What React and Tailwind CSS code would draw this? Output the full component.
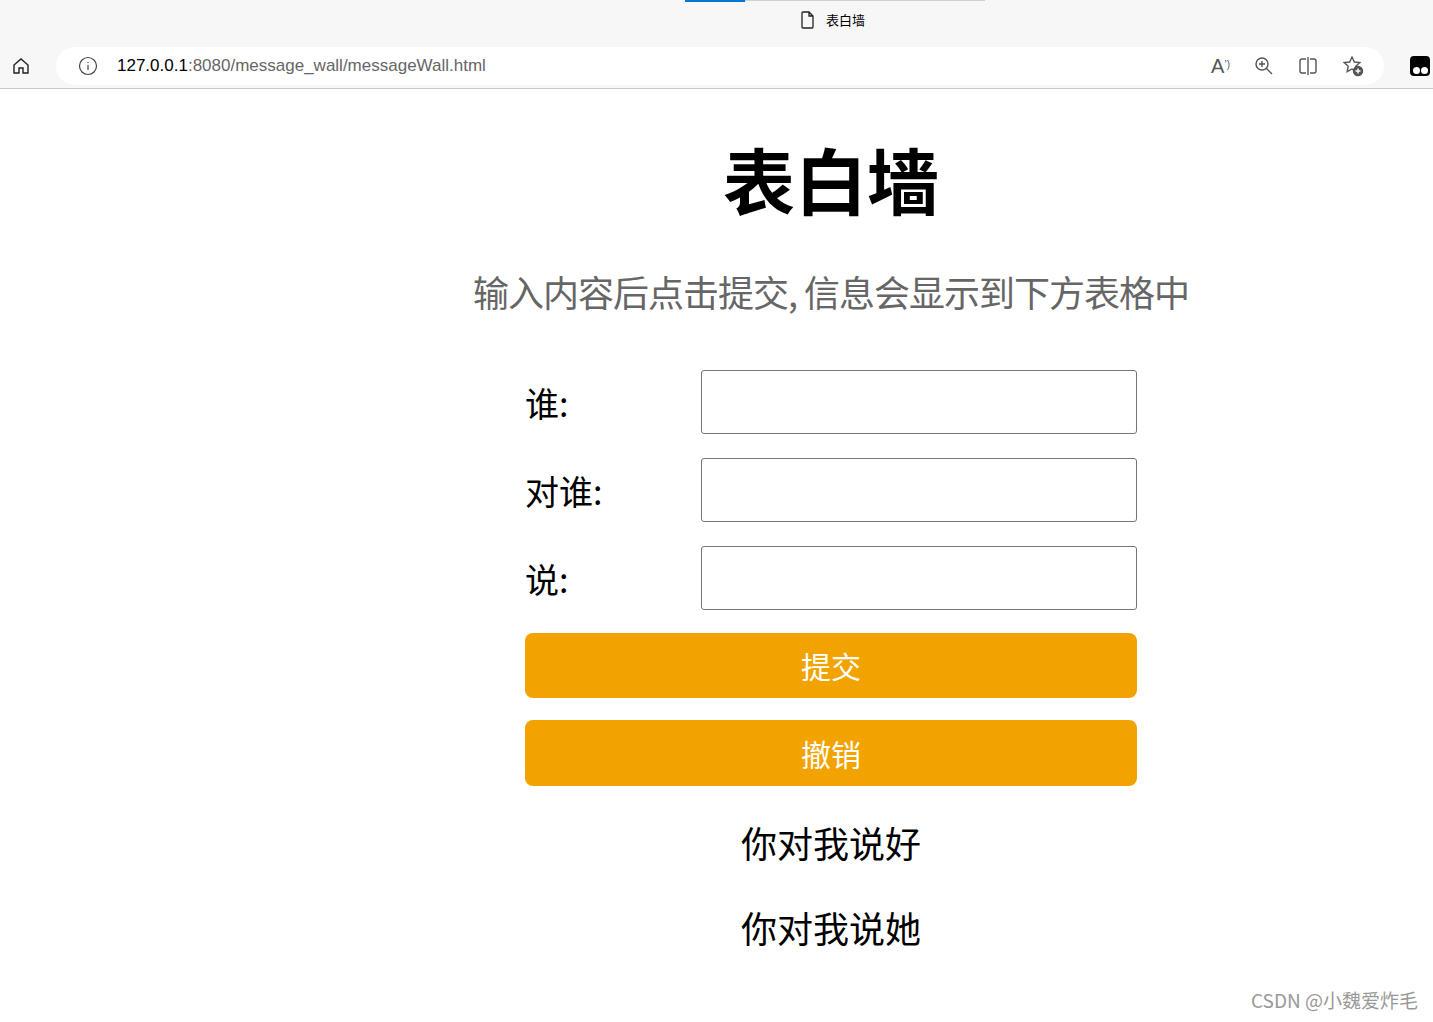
import React from "react";

const F = { fontFamily: '"Noto Sans CJK SC","Noto Sans",sans-serif' };

export default function App() {
  return (
    <div className="w-[1433px] h-[1022px] bg-white relative overflow-hidden" style={F}>
      {/* tab bar */}
      <div className="h-[44px] bg-[#f7f7f7] relative">
        <div className="absolute left-[685px] top-0 w-[60px] h-[2px] bg-[#0a74d8]" />
        <div className="absolute left-[745px] top-0 w-[240px] h-[1px] bg-[#d0d0d0]" />
        <div className="absolute left-[800px] top-[9px] flex items-center gap-[10px] h-[22px]">
          <svg width="16" height="18" viewBox="0 0 16 18" fill="none" stroke="#222" strokeWidth="1.3"><path d="M3 1h6l4 4v11a1 1 0 0 1-1 1H3a1 1 0 0 1-1-1V2a1 1 0 0 1 1-1z M9 1v4h4"/></svg>
          <span className="text-[13px] text-black">表白墙</span>
        </div>
      </div>
      {/* address bar */}
      <div className="h-[45px] bg-[#f7f7f7] border-b border-[#c8c8c8] flex items-center">
        <div className="w-[42px] flex justify-center">
          <svg width="20" height="20" viewBox="0 0 20 20" fill="none" stroke="#222" strokeWidth="1.4"><path d="M3 9l7-6 7 6v8h-5v-5H8v5H3z"/></svg>
        </div>
        <div className="w-[1328px] h-[38px] ml-[14px] bg-white rounded-full flex items-center pl-[22px] pr-[20px]">
          <svg width="20" height="20" viewBox="0 0 20 20" fill="none" stroke="#444" strokeWidth="1.2"><circle cx="10" cy="10" r="8.5"/><path d="M10 9v5M10 6v1"/></svg>
          <span className="ml-[19px] text-[17px] text-[#666]" style={{fontFamily:'"Liberation Sans",sans-serif'}}><span className="text-black">127.0.0.1</span>:8080/message_wall/messageWall.html</span>
          <div className="ml-auto flex items-center gap-[24px] text-[#555]">
            <span className="text-[20px] leading-none" style={{fontFamily:'"Liberation Sans",sans-serif'}}>A<sup className="text-[10px]">ʼ)</sup></span>
            <svg width="20" height="20" viewBox="0 0 20 20" fill="none" stroke="#555" strokeWidth="1.4"><circle cx="8" cy="8" r="6"/><path d="M12.5 12.5L18 18M8 5v6M5 8h6"/></svg>
            <svg width="20" height="20" viewBox="0 0 20 20" fill="none" stroke="#555" strokeWidth="1.4"><path d="M8 3H4a2 2 0 0 0-2 2v10a2 2 0 0 0 2 2h4M12 3h4a2 2 0 0 1 2 2v10a2 2 0 0 1-2 2h-4M10 1v18"/></svg>
            <svg width="22" height="22" viewBox="0 0 22 22" fill="none" stroke="#555" strokeWidth="1.4"><path d="M10 2l2.4 5 5.4.6-4 3.7 1 5.3L10 14l-4.8 2.6 1-5.3-4-3.7 5.4-.6z"/><circle cx="16" cy="16" r="4.5" fill="#555"/><path d="M16 13.5v5M13.5 16h5" stroke="#fff"/></svg>
          </div>
        </div>
        <div className="ml-[26px] w-[20px] h-[20px] bg-black rounded-[4px] flex items-end justify-center gap-[1px] pb-[2px]">
          <span className="w-[7px] h-[7px] bg-white rounded-full" /><span className="w-[7px] h-[7px] bg-white rounded-full" />
        </div>
      </div>
      {/* content */}
      <div className="ml-[471px] w-[720px] flex flex-col items-center">
        <h1 className="mt-[45px] text-[72px] font-bold leading-[88px] text-black">表白墙</h1>
        <p className="mt-[44px] text-[36px] leading-[50px] text-[#666] tracking-[-1px] whitespace-nowrap">输入内容后点击提交, 信息会显示到下方表格中</p>
        <div className="w-[612px] mt-[54px] flex flex-col">
          {["谁:", "对谁:", "说:"].map((l, i) => (
            <div key={i} className={`flex items-center h-[64px] ${i ? "mt-[24px]" : ""}`}>
              <span className="w-[176px] text-[34px] text-black">{l}</span>
              <div className="w-[436px] h-[64px] border border-[#767676] rounded-[3px]" />
            </div>
          ))}
          <button className="mt-[23px] h-[65px] rounded-[8px] bg-[#f2a300] text-white text-[30px]">提交</button>
          <button className="mt-[22px] h-[66px] rounded-[8px] bg-[#f2a300] text-white text-[30px]">撤销</button>
          <div className="mt-[31px] text-center text-[36px] leading-[50px] text-black">你对我说好</div>
          <div className="mt-[35px] text-center text-[36px] leading-[50px] text-black">你对我说她</div>
        </div>
      </div>
      <div className="absolute right-[15px] bottom-[8px] text-[19px] text-[#999]">CSDN @小魏爱炸毛</div>
    </div>
  );
}
